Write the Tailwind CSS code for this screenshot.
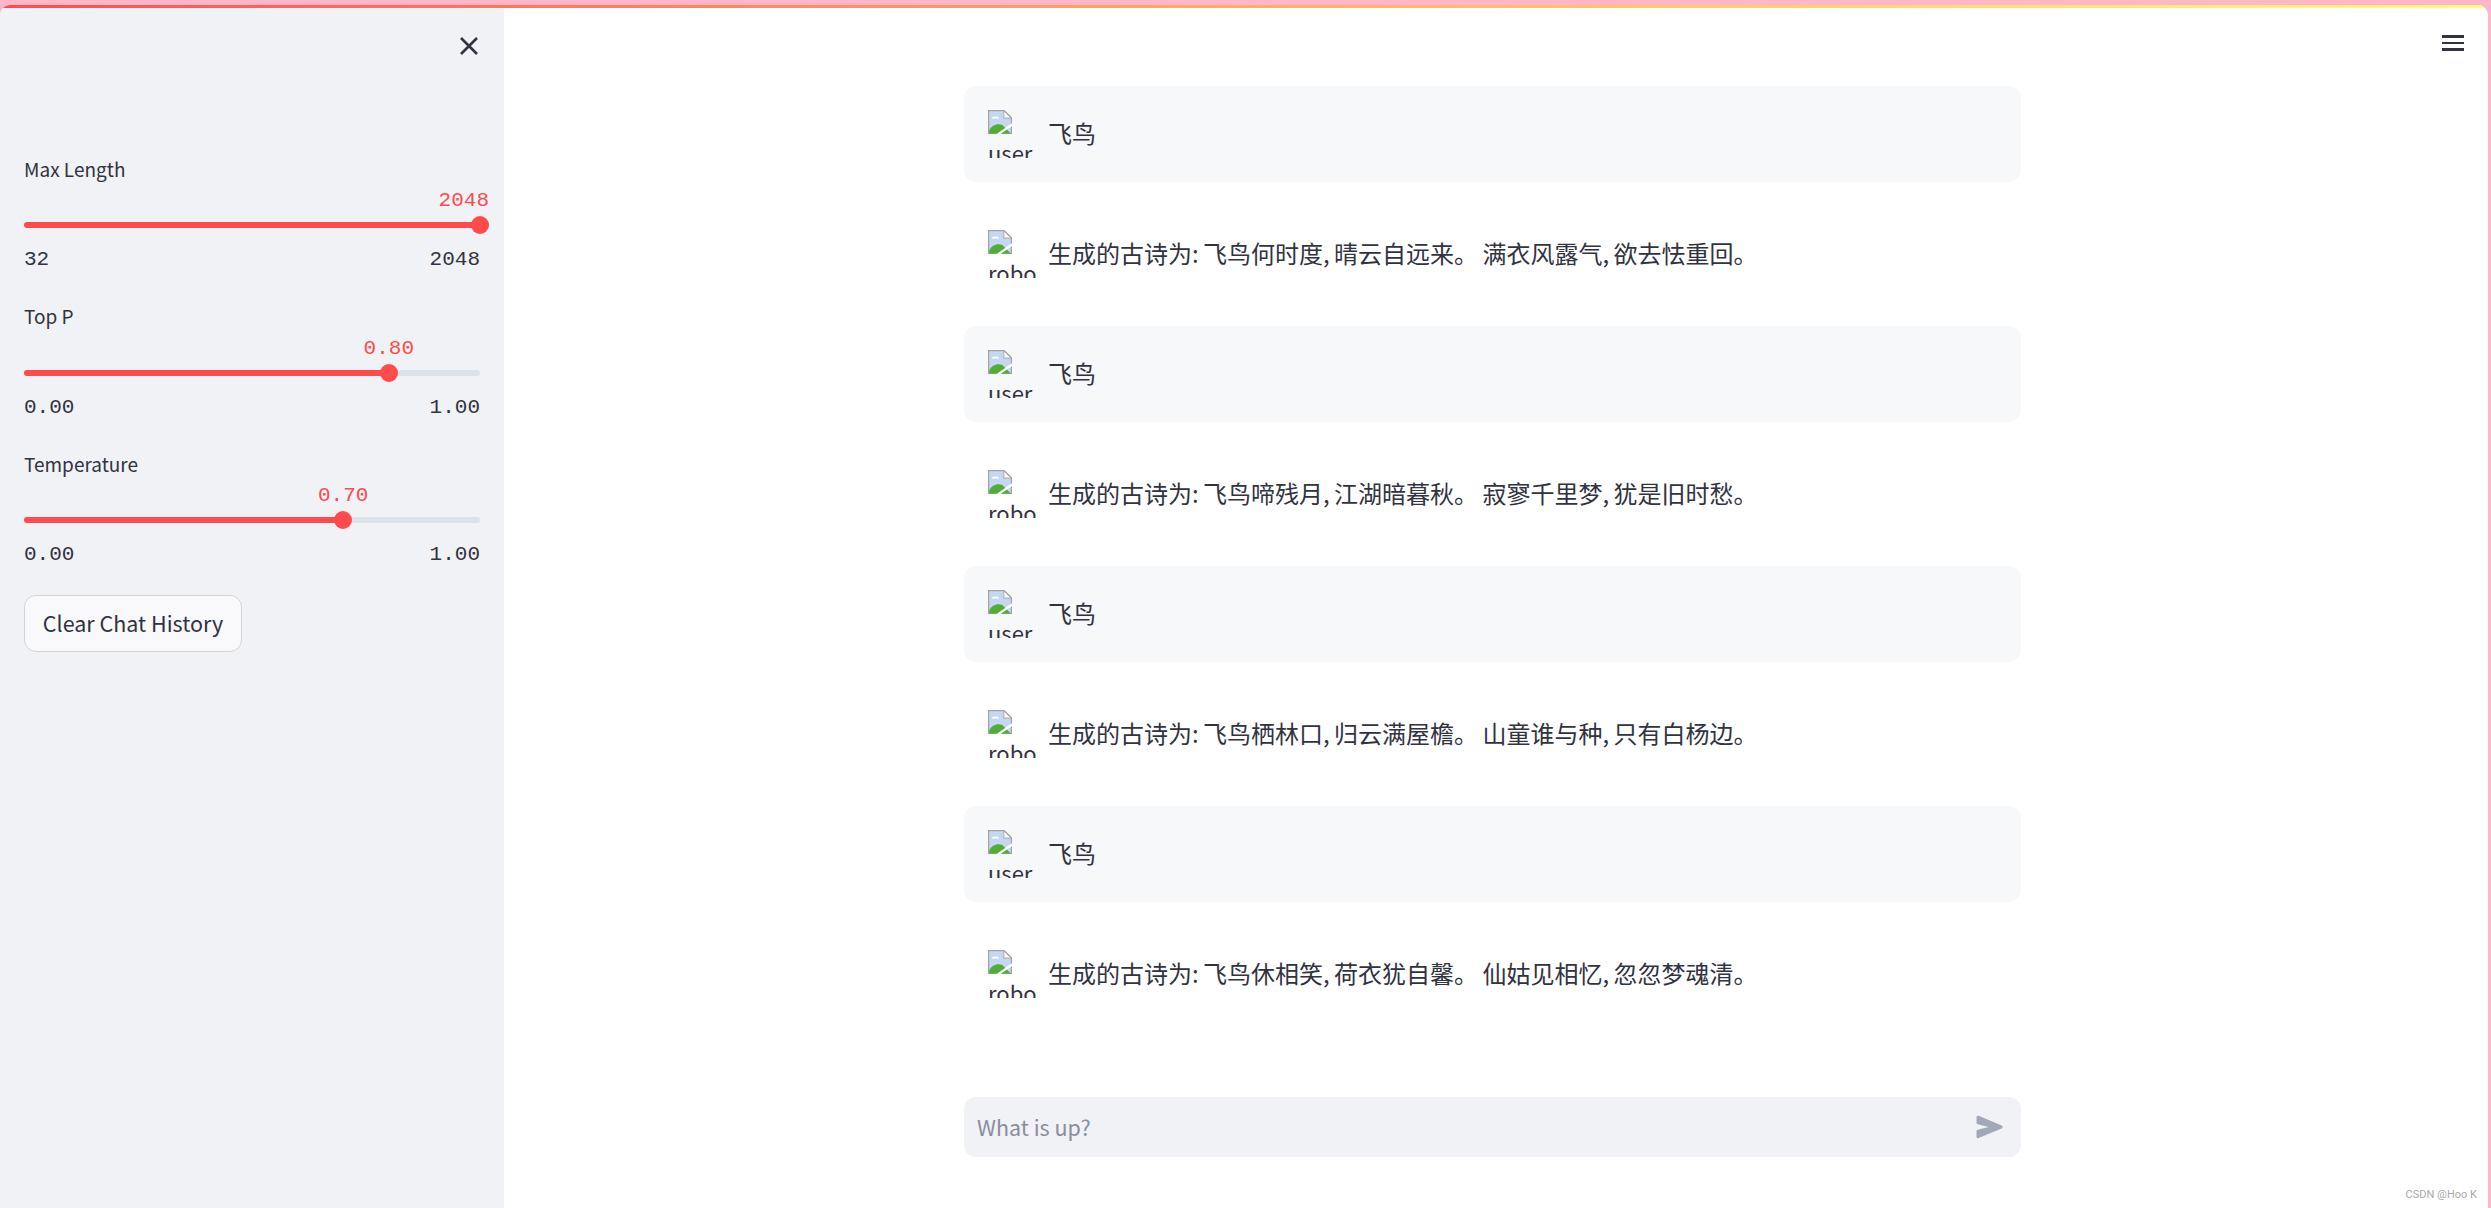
<!DOCTYPE html>
<html lang="zh">
<head>
  <meta charset="UTF-8" />
  <title>Chat</title>
  <script src="https://cdn.jsdelivr.net/npm/@tailwindcss/browser@4"></script>
</head>
<body class="bg-[#fdb6ca] font-['Noto_Sans_CJK_SC','Noto_Sans',sans-serif] text-[#31333f]">
  <div class="h-screen pt-[5px] pr-[3px] overflow-hidden relative">
    <div class="h-full rounded-t-[10px] overflow-hidden bg-white flex flex-col">
      <div class="h-[3px] shrink-0 bg-gradient-to-r from-[#ff4b4b] to-[#fffd80]"></div>
      <div class="flex-1 flex min-h-0">

        <!-- sidebar -->
        <aside class="w-[504px] shrink-0 bg-[#f0f2f6] px-6">
          <div class="h-[145.5px] flex justify-end pt-6 pr-[2px]">
            <svg class="w-[18px] h-[18px] mt-[5px]" viewBox="0 0 18 18" fill="none" stroke="#31333f" stroke-width="2.6"><path d="M1 1l16 16M17 1L1 17"/></svg>
          </div>

          <div class="h-[147.5px]">
            <label class="block text-[19px] leading-[30px]">Max Length</label>
            <div class="relative h-[40px] mt-[16.5px]">
              <div class="absolute left-0 right-0 top-[22px] h-[6px] rounded-full bg-[#ff4b4b]"></div>
              <div class="absolute right-[-9px] top-[16px] w-[18px] h-[18px] rounded-full bg-[#ff4b4b]"></div>
              <span class="absolute right-[-9px] top-[-11px] font-['Liberation_Mono',monospace] text-[21px] leading-[24px] text-[#ff4b4b]">2048</span>
            </div>
            <div class="flex justify-between font-['Liberation_Mono',monospace] text-[21px] leading-[24px] mt-[8px]"><span>32</span><span>2048</span></div>
          </div>

          <div class="h-[147.5px]">
            <label class="block text-[19px] leading-[30px]">Top P</label>
            <div class="relative h-[40px] mt-[16.5px]">
              <div class="absolute left-0 right-0 top-[22px] h-[6px] rounded-full bg-[#dde1ea]"></div>
              <div class="absolute left-0 top-[22px] h-[6px] rounded-full bg-[#ff4b4b]" style="width: 80%"></div>
              <div class="absolute top-[16px] w-[18px] h-[18px] -ml-[9px] rounded-full bg-[#ff4b4b]" style="left: 80%"></div>
              <span class="absolute top-[-11px] -translate-x-1/2 font-['Liberation_Mono',monospace] text-[21px] leading-[24px] text-[#ff4b4b]" style="left: 80%">0.80</span>
            </div>
            <div class="flex justify-between font-['Liberation_Mono',monospace] text-[21px] leading-[24px] mt-[8px]"><span>0.00</span><span>1.00</span></div>
          </div>

          <div class="h-[146.5px]">
            <label class="block text-[19px] leading-[30px]">Temperature</label>
            <div class="relative h-[40px] mt-[16.5px]">
              <div class="absolute left-0 right-0 top-[22px] h-[6px] rounded-full bg-[#dde1ea]"></div>
              <div class="absolute left-0 top-[22px] h-[6px] rounded-full bg-[#ff4b4b]" style="width: 70%"></div>
              <div class="absolute top-[16px] w-[18px] h-[18px] -ml-[9px] rounded-full bg-[#ff4b4b]" style="left: 70%"></div>
              <span class="absolute top-[-11px] -translate-x-1/2 font-['Liberation_Mono',monospace] text-[21px] leading-[24px] text-[#ff4b4b]" style="left: 70%">0.70</span>
            </div>
            <div class="flex justify-between font-['Liberation_Mono',monospace] text-[21px] leading-[24px] mt-[8px]"><span>0.00</span><span>1.00</span></div>
          </div>

          <button class="w-[218px] h-[57px] rounded-xl border border-[#d2d3d8] bg-[#f9f9fb] text-[21.5px] leading-none pb-[2px]">Clear Chat History</button>
        </aside>

        <!-- main -->
        <main class="flex-1 relative min-w-0">
          <div class="absolute right-[24px] top-[27px] w-[22px] flex flex-col gap-[4px]">
            <div class="h-[2.5px] bg-[#31333f]"></div>
            <div class="h-[2.5px] bg-[#31333f]"></div>
            <div class="h-[2.5px] bg-[#31333f]"></div>
          </div>

          <div class="w-[1057px] ml-[460px] h-full flex flex-col pt-[78px]">
            <div id="messages" class="flex-1 flex flex-col gap-6"></div>

            <div class="h-[60px] rounded-xl bg-[#f0f2f6] flex items-center justify-between pl-[13px] pr-[13px] mb-[51px] shrink-0">
              <span class="text-[21.5px] text-[#8a8d9c]">What is up?</span>
              <svg class="w-9 h-9" viewBox="0 0 24 24" fill="#a3a8b8"><path d="M3 5.51v3.71c0 .46.31.86.76.97L11 12l-7.24 1.81c-.45.11-.76.51-.76.97v3.71c0 .72.73 1.2 1.39.92l15.42-6.49c.82-.34.82-1.5 0-1.84L4.39 4.58C3.73 4.31 3 4.79 3 5.51z"/></svg>
            </div>
          </div>

          <span class="absolute right-[11px] bottom-[8px] font-['Roboto',sans-serif] text-[11px] leading-none text-[#a9a9a9]">CSDN @Hoo K</span>
        </main>
      </div>
    </div>
  </div>

  <script>
    const poems = [
      "生成的古诗为: 飞鸟何时度, 晴云自远来。 满衣风露气, 欲去怯重回。",
      "生成的古诗为: 飞鸟啼残月, 江湖暗暮秋。 寂寥千里梦, 犹是旧时愁。",
      "生成的古诗为: 飞鸟栖林口, 归云满屋檐。 山童谁与种, 只有白杨边。",
      "生成的古诗为: 飞鸟休相笑, 荷衣犹自馨。 仙姑见相忆, 忽忽梦魂清。"
    ];

    // broken image placeholder, same as the browser draws for a missing avatar
    const brokenImg = `
      <svg class="block w-6 h-6" viewBox="0 0 16 16">
        <path d="M.4.4h10.4l4.8 4.8v10.4H.4z" fill="#c5d7f2" stroke="#a3a3a3" stroke-width=".8"/>
        <path d="M10.6.6v4.8h4.8z" fill="#fff" stroke="#a3a3a3" stroke-width=".6"/>
        <path d="M2.6 5.6c0-1.1 1.5-1.7 2.4-1 .9-.6 2.3 0 2.3 1z" fill="#fff"/>
        <path d="M.8 15.6v-2C2.5 10 6.5 8.6 9.6 10l5.6 5.6z" fill="#4fae33"/>
        <path d="M6.4 16.4L16.4 9.4" stroke="#fff" stroke-width="1.5"/>
      </svg>`;

    function row(alt, text, filled) {
      return `
        <div class="h-[96px] rounded-xl ${filled ? "bg-[#f7f8fa]" : ""} px-6 flex items-center gap-3 text-[24px]">
          <div class="w-12 h-12 shrink-0 overflow-hidden text-[22px] leading-[36px] whitespace-nowrap">
            ${brokenImg}
            <span>${alt}</span>
          </div>
          <p class="-mt-[3px] [word-spacing:-1px]">${text}</p>
        </div>`;
    }

    document.getElementById("messages").innerHTML = poems
      .map((poem) => row("user", "飞鸟", true) + row("robot", poem, false))
      .join("");
  </script>
</body>
</html>
